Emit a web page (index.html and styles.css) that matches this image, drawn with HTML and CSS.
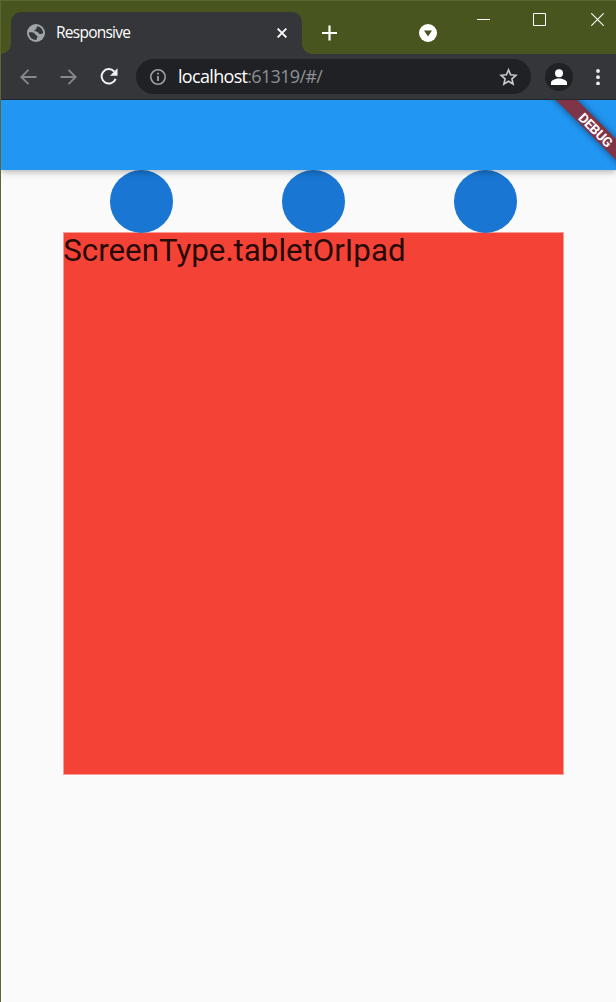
FILE: index.html
```html
<!DOCTYPE html>
<html lang="en">
<head>
<meta charset="utf-8">
<title>Responsive</title>
<link rel="stylesheet" href="styles.css">
</head>
<body>
<div class="window">
  <header class="titlebar">
    <div class="tab">
      <svg class="globe" width="18" height="18" viewBox="0 0 18 18"><circle cx="9" cy="9" r="9" fill="#a0a5aa"/><path d="M1.900 8.300c1.800.1 3.900-.1 5.300.7 1.300.8.8 2.200 2.300 2.500 1 .2 1.200.9.800 1.800-.4.900-.8 1.600-.9 2.700-4.300.2-7.600-3.300-7.500-7.700zM10.300 2.200c3.400.5 5.800 3.400 5.800 6.900-.9 1-2.300 1.200-3.500.8-1.200-.5-1.200-1.900-2.500-2.200-1.200-.3-2.600.1-2.700-1 0-1 1.500-.9 1.800-1.800.3-.9.300-1.600 1.100-2.700z" fill="#35363a"/></svg>
      <span class="tab-title">Responsive</span>
      <svg class="tab-close" width="10" height="10" viewBox="0 0 10 10"><path d="M.6.600l8.800 8.800M9.400.600L.6 9.400" stroke="#fff" stroke-width="1.900"/></svg>
    </div>
    <svg class="new-tab" width="16" height="16" viewBox="0 0 16 16"><path d="M7.500.500v15M0 8h15" stroke="#fff" stroke-width="2.200"/></svg>
    <svg class="tab-search" width="18" height="18" viewBox="0 0 18 18"><circle cx="9" cy="9" r="9" fill="#fff"/><path d="M5 6.500h8L9 12.500z" fill="#48551f"/></svg>
    <div class="controls">
      <svg width="13" height="13" viewBox="0 0 13 13"><path d="M0 6.500h13" stroke="#fff"/></svg>
      <svg width="13" height="13" viewBox="0 0 13 13"><path d="M.5.500h12v12H.5z" fill="none" stroke="#fff"/></svg>
      <svg width="13" height="13" viewBox="0 0 13 13"><path d="M.3.300l12.400 12.400M12.700.300L.3 12.700" stroke="#fff" stroke-width="1.100"/></svg>
    </div>
  </header>
  <nav class="toolbar">
    <svg class="back" width="17" height="16" viewBox="0 0 17 16"><path d="M16.500 8H1.500M8.500.800L1.300 8l7.200 7.200" fill="none" stroke="#87888c" stroke-width="1.900"/></svg>
    <svg class="forward" width="17" height="16" viewBox="0 0 17 16"><path d="M.5 8h15M8.500.800L15.700 8l-7.200 7.200" fill="none" stroke="#87888c" stroke-width="1.900"/></svg>
    <svg class="reload" width="18" height="17" viewBox="0 0 18 17"><path d="M14.200 3.500A7.200 7.200 0 1 0 15.600 10.800" fill="none" stroke="#f1f3f4" stroke-width="2"/><path d="M17.500.300v7.500H10z" fill="#f1f3f4"/></svg>
    <div class="address">
      <svg class="info" width="16" height="16" viewBox="0 0 16 16"><circle cx="8" cy="8" r="7.200" fill="none" stroke="#9aa0a6" stroke-width="1.600"/><path d="M8 3.800v1.800M8 7v5" stroke="#9aa0a6" stroke-width="1.800"/></svg>
      <span class="url"><span class="host">localhost</span><span class="path">:61319/#/</span></span>
      <svg class="star" width="19" height="18" viewBox="0 0 19 18"><path d="M9.500 1.900l2.100 4.900 5.300.5-4 3.500 1.200 5.200-4.600-2.800-4.600 2.800 1.200-5.200-4-3.500 5.300-.5z" fill="none" stroke="#c9cbcd" stroke-width="1.600"/></svg>
    </div>
    <svg class="avatar" width="28" height="28" viewBox="0 0 28 28"><circle cx="14" cy="14" r="14" fill="#202124"/><circle cx="14" cy="10.200" r="4" fill="#fff"/><path d="M6 22v-2.300c0-2.500 4.500-4.200 8-4.200s8 1.700 8 4.200V22z" fill="#fff"/></svg>
    <svg class="menu" width="4" height="16" viewBox="0 0 4 16"><g fill="#e8eaed"><circle cx="2" cy="2" r="1.900"/><circle cx="2" cy="8.200" r="1.900"/><circle cx="2" cy="14.400" r="1.900"/></g></svg>
  </nav>
  <main class="app">
    <div class="appbar"></div>
    <div class="dots"><i class="dot"></i><i class="dot"></i><i class="dot"></i></div>
    <section class="panel">ScreenType.tabletOrIpad</section>
    <div class="banner"><div class="ribbon">DEBUG</div></div>
  </main>
</div>
</body>
</html>
```
FILE: styles.css
```css
* { box-sizing: border-box; }
body { margin: 0; background: #fafafa; }
svg { display: block; flex: none; }
.window { width: 616px; height: 1002px; overflow: hidden; border-left: 1px solid #5b6735; }
.titlebar { height: 54px; background: #48551f; border-top: 1px solid #5b6735; display: flex; align-items: flex-start; }
.tab { position: relative; width: 291px; height: 42px; margin: 11px 0 0 10px; background: #35363a; border-radius: 10px 10px 0 0; display: flex; align-items: center; padding: 0 15px 0 16px; font: 15.500px "Open Sans", "Noto Sans", sans-serif; color: #fff; }
.tab::before, .tab::after { content: ""; position: absolute; bottom: 0; width: 10px; height: 10px; }
.tab::before { left: -10px; background: radial-gradient(circle at 0 0, transparent 9.500px, #35363a 10px); }
.tab::after { right: -10px; background: radial-gradient(circle at 100% 0, transparent 9.500px, #35363a 10px); }
.tab-title { margin: -2px 0 0 11px; flex: 1; letter-spacing: -.75px; }
.new-tab { margin: 24px 0 0 20px; }
.tab-search { margin: 23px 0 0 81px; }
.controls { display: flex; gap: 44px; margin: 12px 0 0 40px; }
.controls svg:first-child { margin-right: -1px; }
.controls svg + svg + svg { margin-left: 1px; }
.toolbar { height: 46px; background: #35363a; border-bottom: 1px solid #242528; display: flex; align-items: center; padding-left: 19px; }
.forward { margin-left: 23px; }
.reload { margin-left: 23px; }
.address { width: 395px; height: 35px; margin-left: 18px; border-radius: 18px; background: #202124; display: flex; align-items: center; padding: 0 13px 0 14px; }
.url { margin: -2px 0 0 12px; flex: 1; font: 18px "Open Sans", "Noto Sans", sans-serif; white-space: nowrap; letter-spacing: -.68px; }
.host { color: #fff; }
.path { color: #8d9196; }
.avatar { margin-left: 14px; }
.menu { margin-left: 23px; }
.app { position: relative; height: 902px; background: #fafafa; overflow: hidden; }
.appbar { position: relative; z-index: 1; height: 70px; background: #2196f3; box-shadow: 0 2px 5px -1px rgba(0,0,0,.2), 0 5px 6px rgba(0,0,0,.06), 0 1px 10px rgba(0,0,0,.08); }
.dots { display: flex; gap: 109px; padding-left: 109px; }
.dot { width: 63px; height: 62.500px; border-radius: 50%; background: #1976d2; }
.panel { width: 501px; height: 542.500px; margin: -.5px 0 0 62px; background: #f44336; border: 1px solid #f99e97; color: rgba(0,0,0,.87); font: 31.250px/36px Roboto, sans-serif; text-indent: -.7px; }
.banner { position: absolute; z-index: 2; top: 0; right: 0; width: 80px; height: 80px; overflow: hidden; height: 70px; }
.ribbon { position: absolute; left: 0; top: 22px; width: 120px; height: 15px; background: #803448; box-shadow: 0 0 7px rgba(0,0,0,.5); color: #fff; font: 700 13.500px/16px Roboto, sans-serif; letter-spacing: -.3px; text-align: center; transform: rotate(45deg); }
```
